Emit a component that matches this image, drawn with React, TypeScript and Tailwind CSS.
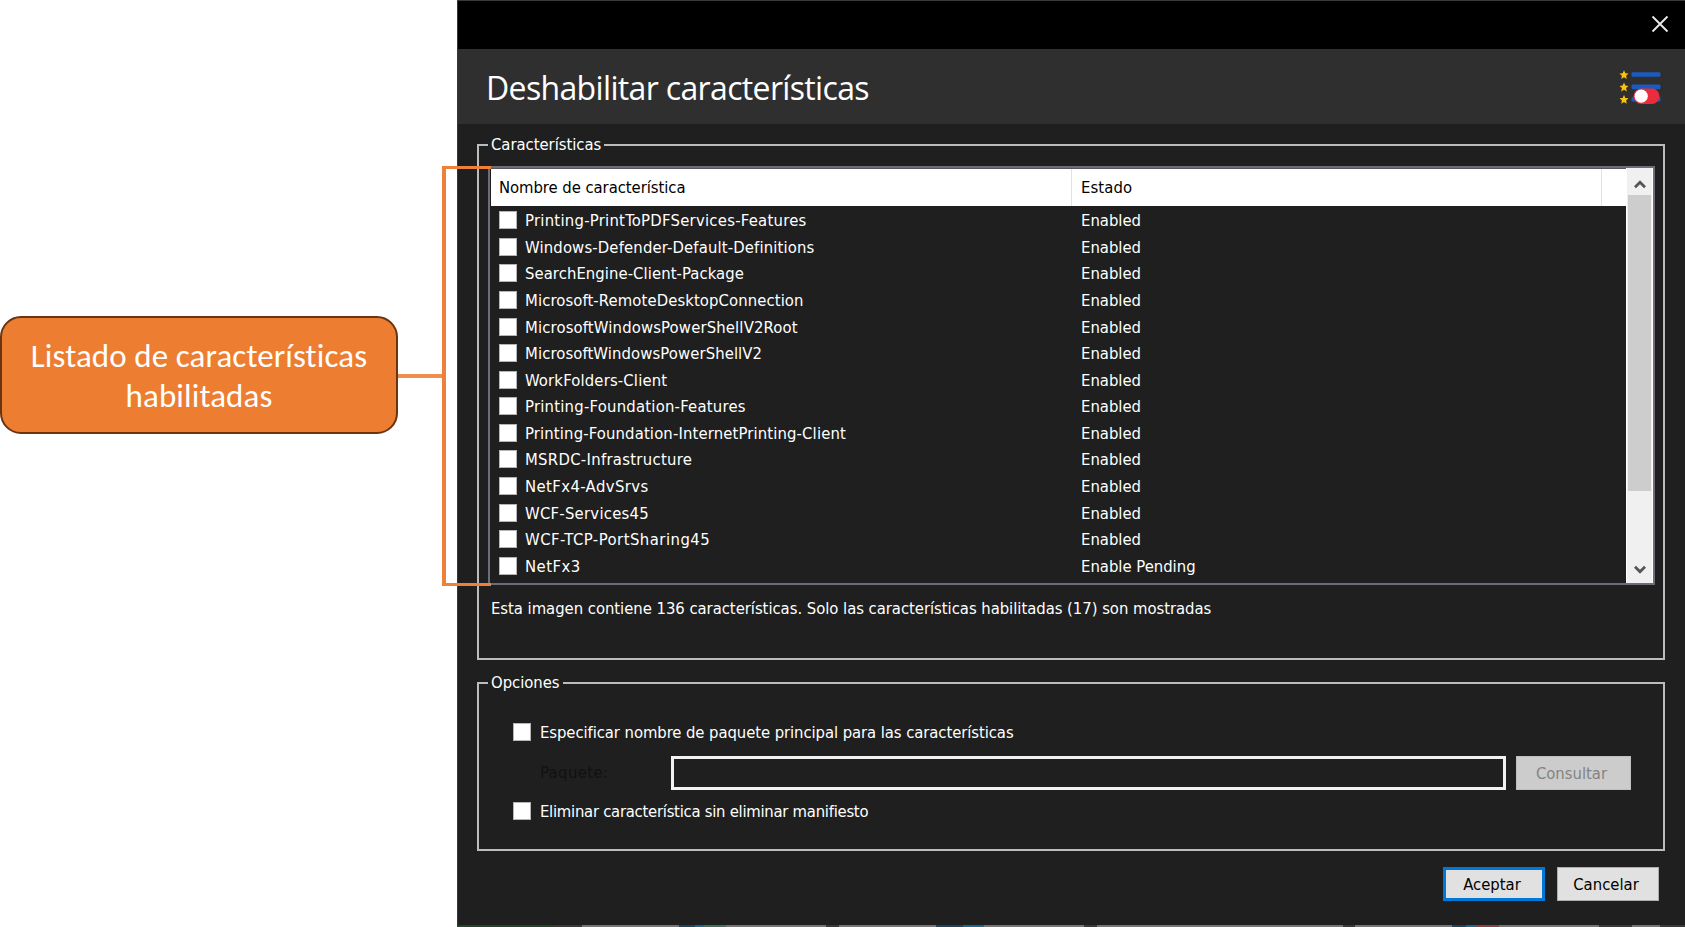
import type { ReactNode } from "react";

type Feature = { name: string; tracking: string; state: string };

const features: Feature[] = [
  { name: "Printing-PrintToPDFServices-Features", tracking: "tracking-[0.26px]", state: "Enabled" },
  { name: "Windows-Defender-Default-Definitions", tracking: "tracking-[0.15px]", state: "Enabled" },
  { name: "SearchEngine-Client-Package", tracking: "tracking-[0.07px]", state: "Enabled" },
  { name: "Microsoft-RemoteDesktopConnection", tracking: "tracking-[0.1px]", state: "Enabled" },
  { name: "MicrosoftWindowsPowerShellV2Root", tracking: "tracking-[0.15px]", state: "Enabled" },
  { name: "MicrosoftWindowsPowerShellV2", tracking: "tracking-[0.1px]", state: "Enabled" },
  { name: "WorkFolders-Client", tracking: "tracking-[0.16px]", state: "Enabled" },
  { name: "Printing-Foundation-Features", tracking: "tracking-[0.23px]", state: "Enabled" },
  { name: "Printing-Foundation-InternetPrinting-Client", tracking: "tracking-[0.14px]", state: "Enabled" },
  { name: "MSRDC-Infrastructure", tracking: "tracking-[0.3px]", state: "Enabled" },
  { name: "NetFx4-AdvSrvs", tracking: "tracking-[0.4px]", state: "Enabled" },
  { name: "WCF-Services45", tracking: "tracking-[0.25px]", state: "Enabled" },
  { name: "WCF-TCP-PortSharing45", tracking: "tracking-[0.48px]", state: "Enabled" },
  { name: "NetFx3", tracking: "tracking-[0.45px]", state: "Enable Pending" },
];

function CheckBox() {
  return <span className="block h-[18px] w-[18px] shrink-0 border border-[#b5b5b5] bg-white" />;
}

function Group({ title, className, children }: { title: string; className: string; children: ReactNode }) {
  return (
    <fieldset className={`ml-[19px] w-[1188px] border-2 border-[#bcbcbc] ${className}`}>
      <legend className="ml-[9px] h-5 pr-[3px] pl-[3px] leading-5 tracking-[-0.03px]">{title}</legend>
      {children}
    </fieldset>
  );
}

function FeaturesIcon() {
  const star = "0,-4.6 1.35,-1.6 4.5,-1.3 2.1,0.9 2.8,4.2 0,2.5 -2.8,4.2 -2.1,0.9 -4.5,-1.3 -1.35,-1.6";
  return (
    <svg width="42" height="36" viewBox="0 0 42 36">
      <g fill="#1b5bbf">
        <rect x="12.5" y="3.2" width="29" height="4.6" rx="1.2" />
        <rect x="12.5" y="15.6" width="29" height="4.6" rx="1.2" />
        <rect x="12.5" y="28" width="29" height="4.6" rx="1.2" />
      </g>
      <g fill="#fcc40c">
        <polygon points={star} transform="translate(5 5.8)" />
        <polygon points={star} transform="translate(5 18.2)" />
        <polygon points={star} transform="translate(5 30.6)" />
      </g>
      <rect x="14.5" y="19.5" width="26" height="15.5" rx="7.7" fill="#ea2c3c" />
      <circle cx="22.2" cy="27.2" r="6.6" fill="#fff" />
    </svg>
  );
}

function DesktopEdge() {
  return (
    <div className="flex h-[2px] bg-[#3c3839]">
      <div className="w-[96px] bg-[#27422a]" />
      <div className="ml-[28px] w-[97px] bg-[#777475]" />
      <div className="w-[16px] bg-[#21445c]" />
      <div className="w-[9px] bg-[#1b6a8c]" />
      <div className="w-[22px] bg-[#45715c]" />
      <div className="w-[100px] bg-[#777475]" />
      <div className="ml-[13px] w-[97px] bg-[#777475]" />
      <div className="w-[27px] bg-[#21445c]" />
      <div className="w-[21px] bg-[#1b6a8c]" />
      <div className="w-[100px] bg-[#777475]" />
      <div className="ml-[13px] w-[246px] bg-[#777475]" />
      <div className="ml-[12px] w-[97px] bg-[#777475]" />
      <div className="w-[14px] bg-[#21445c]" />
      <div className="w-[10px] bg-[#1b6a8c]" />
      <div className="w-[23px] bg-[#8a4048]" />
      <div className="w-[100px] bg-[#777475]" />
      <div className="ml-[33px] w-[28px] bg-[#777475]" />
    </div>
  );
}

function ScrollBar() {
  return (
    <div className="flex w-[27px] flex-col items-center border-x border-white bg-[#f0f0f0] text-[#555]">
      <div className="flex h-[27px] items-center justify-center pt-1">
        <svg width="12" height="10" viewBox="0 0 12 10" fill="none" stroke="currentColor" strokeWidth="2.8">
          <path d="M1 8.2 6 3.2l5 5" />
        </svg>
      </div>
      <div className="h-[296px] w-[23px] bg-[#cdcdcd]" />
      <div className="mt-auto flex h-[26px] items-center justify-center">
        <svg width="12" height="10" viewBox="0 0 12 10" fill="none" stroke="currentColor" strokeWidth="2.8">
          <path d="m1 1.8 5 5 5-5" />
        </svg>
      </div>
    </div>
  );
}

function FeatureList() {
  return (
    <div className="ml-[9px] mt-[11px] flex h-[419px] w-[1167px] border-2 border-[#6b6f75]">
      <div className="flex w-[1136px] flex-col">
        <div className="ml-px flex h-[38px] border-t border-[#555] bg-white pl-[8px] text-black">
          <div className="w-[573px] border-r border-[#e2e2e2] leading-[38px] tracking-[-0.05px]">
            Nombre de característica
          </div>
          <div className="w-[530px] border-r border-[#e2e2e2] pl-[9px] leading-[38px] tracking-[0.1px]">Estado</div>
        </div>
        <ul className="pt-[1px]">
          {features.map((f) => (
            <li key={f.name} className="flex h-[26.58px] items-center pl-[9px]">
              <CheckBox />
              <span className={`w-[564px] pt-[2px] pl-2 whitespace-nowrap ${f.tracking}`}>{f.name}</span>
              <span className="pt-[2px]">{f.state}</span>
            </li>
          ))}
        </ul>
      </div>
      <ScrollBar />
    </div>
  );
}

export default function App() {
  return (
    <div className="relative flex h-[927px] w-[1685px] overflow-hidden bg-white font-['DejaVu_Sans_Condensed','DejaVu_Sans',sans-serif] text-[16.5px] leading-6 text-white">
      <aside className="w-[457px] shrink-0 pt-[316px]">
        <div className="flex h-[118px] w-[398px] items-center justify-center rounded-[21px] border-2 border-[#6a3410] bg-[#ed7d31] pt-[1px] text-center font-[Carlito,Lato,sans-serif] text-[33px] leading-[40px] tracking-[0.1px]">
          <p>
            Listado de características
            <br />
            habilitadas
          </p>
        </div>
      </aside>

      <main className="flex w-[1228px] flex-col border-t border-l border-t-[#3a3a3a] border-l-[#27422a] bg-[#1f1f1f]">
        <div className="flex h-[48px] items-center justify-end bg-black pr-4 pb-[2px]">
          <svg width="18" height="18" viewBox="0 0 18 18" fill="none" stroke="#e8e8e8" strokeWidth="1.9">
            <path d="m1.5 1.5 15 15m0-15-15 15" />
          </svg>
        </div>
        <header className="flex h-[75px] items-center justify-between bg-[#2f2f2f] pr-[24px] pl-[28px]">
          <h1 className="pt-[2px] font-['Open_Sans','Noto_Sans',sans-serif] text-[32px] leading-[40px] tracking-[-0.65px]">
            Deshabilitar características
          </h1>
          <FeaturesIcon />
        </header>

        <Group title="Características" className="mt-[11px] h-[525px]">
          <FeatureList />
          <p className="mt-[12px] ml-[12px] tracking-[-0.03px]">
            Esta imagen contiene 136 características. Solo las características habilitadas (17) son mostradas
          </p>
        </Group>

        <Group title="Opciones" className="mt-[13px] h-[178px]">
          <div className="mt-[27px] ml-[34px] flex h-6 items-center gap-[9px]">
            <CheckBox />
            <span className="pt-[2px] tracking-[-0.07px]">
              Especificar nombre de paquete principal para las características
            </span>
          </div>
          <div className="mt-[12px] ml-[61px] flex h-[34px] items-center">
            <span className="w-[131px] tracking-[0.4px] text-[#111]">Paquete:</span>
            <div className="h-[34px] w-[835px] border-3 border-[#f2f2f2]" />
            <button className="ml-[10px] h-[34px] w-[115px] border border-[#bfbfbf] bg-[#cccccc] pt-[2px] pr-[4px] text-[#838383]">
              Consultar
            </button>
          </div>
          <div className="mt-[9px] ml-[34px] flex h-6 items-center gap-[9px]">
            <CheckBox />
            <span className="pt-[1px] tracking-[-0.26px]">Eliminar característica sin eliminar manifiesto</span>
          </div>
        </Group>

        <footer className="mt-[16px] flex justify-end gap-[12px] pr-[26px] text-black">
          <button className="h-[34px] w-[102px] border-3 border-[#0078d7] bg-[#e1e1e1] pt-[2px] pr-[4px]">
            Aceptar
          </button>
          <button className="h-[34px] w-[102px] border border-[#adadad] bg-[#e1e1e1] pt-[2px] pr-[4px]">
            Cancelar
          </button>
        </footer>
        <div className="mt-auto">
          <DesktopEdge />
        </div>
      </main>

      <div className="absolute top-[374px] left-[398px] h-[4px] w-[45px] bg-[#f08e4d]" />
      <div className="absolute top-[166px] left-[442px] h-[420px] w-[49px] border-y-3 border-l-4 border-[#ee8139]" />
    </div>
  );
}
